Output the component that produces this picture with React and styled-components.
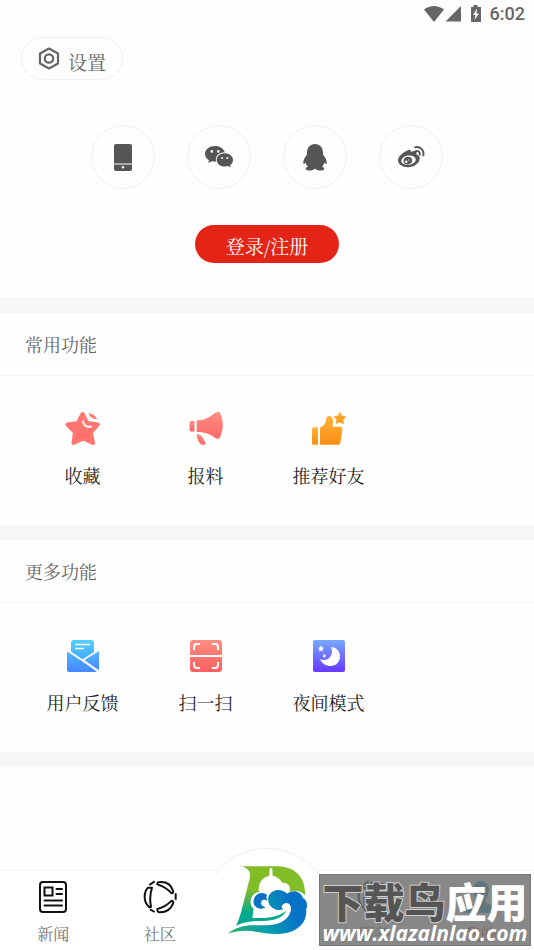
import React from 'react';
import styled, { createGlobalStyle } from 'styled-components';

const GlobalStyle = createGlobalStyle`
    * {
        box-sizing: border-box;
    }

    body {
        margin: 0;
        background: #fefefe;
        color: #333;
        font-family: "Noto Serif CJK SC", "Noto Serif SC", "Noto Sans CJK SC", serif;
    }

    button {
        font-family: inherit;
        padding: 0;
        border: 0;
        background: none;
        cursor: pointer;
    }

    svg {
        display: block;
    }
`;

const Page = styled.div`
    position: relative;
    min-height: 100vh;
    display: flex;
    flex-direction: column;
`;

const StatusBar = styled.header`
    display: flex;
    justify-content: flex-end;
    align-items: center;
    height: 27px;
    padding-right: 9px;
    color: #666;
    font: 500 18px/27px Roboto, sans-serif;

    svg {
        margin-right: 8px;
    }
`;

const Account = styled.section`
    display: flex;
    flex-direction: column;
    align-items: center;
    padding: 10px 21px 35px;
`;

const SettingsButton = styled.button`
    align-self: flex-start;
    display: flex;
    align-items: center;
    gap: 8px;
    height: 43px;
    && {
        padding: 0 16px;
        border: 1px solid #f1f1f1;
    }
    border-radius: 22px;
    color: #666;
    font-size: 19px;

    span {
        padding-top: 5px;
    }
`;

const Logins = styled.div`
    display: flex;
    gap: 32px;
    margin: 45px 0 36px;
`;

const LoginCircle = styled.button`
    && {
        border: 1px solid #f0f0f0;
    }
    width: 64px;
    height: 64px;
    border-radius: 50%;
    display: grid;
    place-items: center;
`;

const LoginButton = styled.button`
    && {
        background: #e32416;
        padding-top: 2px;
    }
    width: 144px;
    height: 38px;
    border-radius: 19px;
    color: #fff;
    font-size: 19px;
`;

const Panel = styled.section`
    border-top: 15px solid #f6f6f6;
`;

const PanelTitle = styled.h2`
    margin: 0;
    height: 63px;
    padding: 0 25px;
    border-bottom: 1px solid #f6f6f6;
    color: #666;
    font-size: 18px;
    font-weight: 400;
    line-height: 63px;
`;

const Features = styled.div`
    display: grid;
    grid-template-columns: repeat(4, 1fr);
    padding: 35px 21px;
`;

const Feature = styled.button`
    display: flex;
    flex-direction: column;
    align-items: center;
    gap: 14px;
    color: #222;
    font-size: 18px;
    line-height: 29px;
`;

const PanelEnd = styled.div`
    height: 15px;
    background: #f6f6f6;
`;

const TabBar = styled.nav`
    display: grid;
    grid-template-columns: repeat(5, 1fr);
    height: 80px;
    margin-top: auto;
    border-top: 1px solid #f3f3f3;
    background: #fff;
`;

const Tab = styled.a`
    display: flex;
    flex-direction: column;
    align-items: center;
    gap: 8px;
    padding-top: 9px;
    color: ${({ $active }) => ($active ? '#e32416' : '#777')};
    font-size: 16px;
    line-height: 24px;
    text-decoration: none;
`;

const HomeTab = styled.a`
    display: flex;
    justify-content: center;
    margin-top: -23px;

    svg {
        flex: none;
    }
`;

const Watermark = styled.aside`
    position: absolute;
    right: 3px;
    bottom: 4px;
    width: 212px;
    height: 72px;
    border: 1px solid #777;
    background: rgba(112, 112, 112, 0.83);
    color: #fff;
    text-align: center;
    white-space: nowrap;
`;

const WatermarkName = styled.div`
    font: 900 41px/50px "Noto Sans CJK SC", sans-serif;

    span {
        color: #555;
        -webkit-text-stroke: 2px #ccc;
        paint-order: stroke fill;
    }
`;

const WatermarkSite = styled.div`
    font: italic 700 21px/16px "Open Sans", sans-serif;
`;

const StatusIcons = () => (
    <svg width="58" height="18" viewBox="0 0 58 18" fill="#666" aria-hidden="true">
        <path d="M0 4.500C6-.2 14-.2 20 4.500L10 17z" />
        <path d="M37 1v15.500H21.500z" />
        <path d="M47 2h2.500V0h4v2H57v15H47z" />
        <path d="M53 3.500 49 10h2.500l-1 5L55 8.500h-2.500z" fill="#fff" />
    </svg>
);

const GearIcon = () => (
    <svg width="22" height="24" viewBox="0 0 22 24" fill="none" stroke="#666" strokeWidth="2.200" strokeLinejoin="round" aria-hidden="true">
        <path d="M11 1.500 20 6.500v10l-9 5-9-5v-10z" />
        <circle cx="11" cy="11.500" r="4.200" />
    </svg>
);

const PhoneIcon = () => (
    <svg width="18" height="27" viewBox="0 0 18 27" fill="#555" aria-hidden="true">
        <path d="M2 0h14a2 2 0 0 1 2 2v17.500H0V2a2 2 0 0 1 2-2zM0 20.500h18V25a2 2 0 0 1-2 2H2a2 2 0 0 1-2-2z" />
        <circle cx="9" cy="23.200" r="1.200" fill="#fff" />
    </svg>
);

const WechatIcon = () => (
    <svg width="28" height="22" viewBox="0 0 28 22" fill="#555" aria-hidden="true">
        <path d="M10 0C4.400 0 0 3.500 0 8c0 2.600 1.500 4.700 4 6.200L3.200 17l3.600-1.800c1.500.4 2.800.5 4.400.4-1.500-5 2.700-9.500 8.600-9.300C18.700 2.500 14.800 0 10 0z" />
        <path d="M19.700 7.300c-4.500 0-8 2.900-8 6.600s3.500 6.600 8 6.600c1.200 0 2.200-.2 3.200-.5l2.700 1.500-.6-2.300c1.800-1.300 3-3.200 3-5.300 0-3.700-3.800-6.600-8.300-6.600z" />
        <g fill="#fff">
            <circle cx="6.800" cy="5.400" r="1.300" />
            <circle cx="13.300" cy="5.400" r="1.300" />
            <circle cx="17" cy="12" r="1" />
            <circle cx="22.400" cy="12" r="1" />
        </g>
    </svg>
);

const QqIcon = () => (
    <svg width="24" height="27" viewBox="0 0 24 27" fill="#555" aria-hidden="true">
        <path d="M12 0C7 0 4 3.800 4 8.500v2C2 13 .5 15.500.3 18c-.1 2 .5 2.500 1.200 1.800l1.200-1.300c.3 1.700 1 3 2.200 4.200-1.600.5-2.300 1.300-2.100 2.300.3 1.400 2.700 1.700 4.900 1.500 1.900-.2 3.400-.8 4.300-1.700.9.900 2.400 1.500 4.300 1.700 2.200.2 4.600-.1 4.900-1.500.2-1-.5-1.800-2.100-2.300 1.200-1.200 1.900-2.500 2.200-4.200l1.200 1.300c.7.700 1.300.2 1.200-1.800-.2-2.500-1.700-5-3.700-7.500v-2C20 3.800 17 0 12 0z" />
    </svg>
);

const WeiboIcon = () => (
    <svg width="27" height="22" viewBox="0 0 27 22" aria-hidden="true">
        <path fill="#555" d="M9.800 4.200c2-1.100 3.400-.6 2.900 1.800 2.600-1.200 5.800-1.500 5.900.5 0 .7-.2 1.200-.4 1.800 2 .7 3.700 2 3.500 4.500-.3 4.300-5.300 8.400-11.800 8.400C4.600 21.200 0 18.600 0 14.300c0-3.700 4.700-8 9.800-10.100z" />
        <ellipse cx="10.500" cy="14.300" rx="7.300" ry="4.700" fill="#fff" transform="rotate(-8 10 14)" />
        <ellipse cx="9.600" cy="14.600" rx="4.400" ry="3.900" fill="#555" transform="rotate(-20 10 14)" />
        <circle cx="8.200" cy="15.700" r="1.300" fill="#fff" />
        <circle cx="11" cy="14" r=".7" fill="#fff" />
        <path d="M17 1.300c5-1.300 9.500 3 8.300 8M18 5c2.400-.6 4.300 1.300 3.700 3.700" fill="none" stroke="#555" strokeWidth="1.900" strokeLinecap="round" />
    </svg>
);

const Gradient = ({ id, from, to }) => (
    <linearGradient id={id} x1="0" y1="0" x2="0" y2="1">
        <stop offset="0" stopColor={from} />
        <stop offset="1" stopColor={to} />
    </linearGradient>
);

const StarIcon = () => (
    <svg width="36" height="36" viewBox="0 0 36 36" aria-hidden="true">
        <defs><Gradient id="star" from="#ff8478" to="#ff6766" /></defs>
        <path d="m17.500 3 4.500 9 10.800 1.500-7 7.800L28 32l-10-4.500L8.500 32l1.500-10.700-7.500-7.800L13 12z" fill="url(#star)" stroke="#ff7570" strokeWidth="4" strokeLinejoin="round" />
        <path d="M21 1.500c2 6 6 8.500 13 7.500" fill="none" stroke="#fefefe" strokeWidth="2" />
        <path d="M23.500 2.500c4 0 7 2 8.400 5.500-4 .3-7-1.800-8.400-5.500z" fill="#ff7a72" />
        <path d="M18 10.500c1 4 4 5.800 8 5" fill="none" stroke="#fff" strokeWidth="1.800" strokeLinecap="round" />
    </svg>
);

const HornIcon = () => (
    <svg width="36" height="36" viewBox="0 0 36 36" aria-hidden="true">
        <defs><Gradient id="horn" from="#ff8e82" to="#ff6868" /></defs>
        <g fill="url(#horn)">
            <path d="M8.700 9.500c7-.2 12-2.500 17.500-7C29 .5 31.500 0 32.500 3c3 7 3 14.500 0 22-1 3.500-3.500 3.500-6 1.500-5-4-11-5.500-17.800-5.500z" />
            <path d="M3 10h3.500v10.500H3Q1.500 20.500 1.500 18.500v-6Q1.500 10 3 10z" />
            <path d="M8.700 23c4 0 7 4 9 10-2 1.500-4.500 1-6-1-2-2.500-3-5.500-3-9z" />
        </g>
    </svg>
);

const ThumbIcon = () => (
    <svg width="36" height="36" viewBox="0 0 36 36" aria-hidden="true">
        <defs><Gradient id="thumb" from="#ffb43b" to="#fb8b12" /></defs>
        <g fill="url(#thumb)">
            <path d="M2.500 16.300H7v17.500H2.500q-1.500 0-1.500-1.500v-14.500q0-1.500 1.500-1.500z" />
            <path d="M9 16.300q5.500-1.300 6-7.800c.3-2.800 2.200-4 4.300-3.300q3.400 1.300 2.700 6.300l-.5 4.200H29c2 0 2.800 1 2.400 3l-2 12.300c-.3 2-1.200 2.800-3 2.800H9z" />
            <path d="m28.800 1.400 2 3.600 4 .8-2.900 2.900.5 4-3.600-1.800-3.600 1.700.7-4L23 5.700l4-.7z" stroke="#ffb43b" strokeLinejoin="round" />
        </g>
    </svg>
);

const MailIcon = () => (
    <svg width="36" height="36" viewBox="0 0 36 36" aria-hidden="true">
        <defs>
            <Gradient id="letter" from="#55cfff" to="#42a8ff" />
            <Gradient id="envelope" from="#50b8ff" to="#4687ff" />
        </defs>
        <path d="M9 2h17q3 0 3 3v10.500L18.500 22 6 14V5q0-3 3-3z" fill="url(#letter)" />
        <path d="M2 12.500 16 21.500 32 34H4q-2 0-2-2V12.500zM34 12.500V33L19 21.800z" fill="url(#envelope)" />
        <path d="m1.500 12 32 21M18 22l16-10M10 6.500h15M10 10.500h9" fill="none" stroke="#fff" strokeWidth="1.700" />
    </svg>
);

const ScanIcon = () => (
    <svg width="36" height="36" viewBox="0 0 36 36" aria-hidden="true">
        <defs><Gradient id="scan" from="#ff8e80" to="#ff6060" /></defs>
        <path d="M5 2h26q3 0 3 3v12H2V5q0-3 3-3zM2 19h32v12q0 3-3 3H5q-3 0-3-3z" fill="url(#scan)" />
        <path d="M6 12V9q0-3 3-3h3M24 6h3q3 0 3 3v3M6 24v3q0 3 3 3h3M24 30h3q3 0 3-3v-3" fill="none" stroke="#fff" strokeWidth="2" />
    </svg>
);

const MoonIcon = () => (
    <svg width="36" height="36" viewBox="0 0 36 36" aria-hidden="true">
        <defs><Gradient id="night" from="#78a8ff" to="#6638ff" /></defs>
        <rect x="2" y="2" width="32" height="32" rx="2" fill="url(#night)" />
        <g fill="#fff">
            <path d="M20 9c5 0 9 4 9 9.500C29 24 25 28 19.500 28c-4.700 0-8.500-2.500-10.500-7 7 3.500 15-3.500 11-12z" />
            <path d="m10 7 1 2.200 2 .5-1.500 1.500.3 2.300-1.800-1-2 1 .4-2.300L7 9.700l2.200-.5z" />
            <circle cx="13.300" cy="18" r="1.400" />
        </g>
    </svg>
);

const NewsIcon = () => (
    <svg width="34" height="34" viewBox="0 0 34 34" fill="none" stroke="#111" strokeWidth="2" strokeLinecap="round" aria-hidden="true">
        <rect x="4" y="2" width="26" height="30" rx="3" />
        <path d="M8.500 7.500h8v8h-8zM20.500 9H26M20.500 14H26M8.500 20.500H26M8.500 25.500H26" />
    </svg>
);

const CommunityIcon = () => (
    <svg width="34" height="34" viewBox="430 121 102 102" fill="none" stroke="#111" strokeWidth="6" strokeLinejoin="round" aria-hidden="true">
        <path d="M445 144Q435 154 435 171q0 21 15 32l4-1q-6-28 3-58z" />
        <path d="M473 134q-1-7 8-7 31-1 39 26 2 8-4 8-17-19-43-27z" />
        <path d="M473 208q26-7 43-25 7 1 4 9-10 26-39 26-9 0-8-10z" />
        <path d="m449 136 16-11M451 209l14 8M528 161v19" />
    </svg>
);

const HomeLogo = () => (
    <svg width="108" height="90" viewBox="0 0 108 90" aria-label="首页" role="img">
        <defs>
            <linearGradient id="letterD" x1="0" y1="0" x2="0" y2="1">
                <stop offset=".4" stopColor="#80bd27" />
                <stop offset=".8" stopColor="#00a98e" />
            </linearGradient>
            <linearGradient id="wave" gradientUnits="userSpaceOnUse" x1="690" y1="285" x2="880" y2="215">
                <stop offset="0" stopColor="#2fb26c" />
                <stop offset=".55" stopColor="#069fae" />
                <stop offset="1" stopColor="#0872c7" />
            </linearGradient>
        </defs>
        <path d="M3 26C27-8 81-8 105 26V90H3z" fill="#fff" />
        <path d="M3 26C27-8 81-8 105 26" fill="none" stroke="#eee" />
        {/* drawn on a larger grid, y grows down from the top of the letter */}
        <g transform="translate(-213 -9) scale(.3333)">
            <path d="M723 82h112c54 2 83 37 80 87-10-14-30-17-45-11 2-18-6-27-23-27-7-13-17-19-29-21l-1-21-4-3-4 3-1 21c-22 5-35 24-31 49-26 2-33 39-16 50l-4 27c38 3 76-1 103-21-10 18-30 28-58 30-32 1-62-1-94 15 8-14 12-30 16-43l25-98c6-23-8-31-27-40z" fill="url(#letterD)" />
            <path d="M684 284c22-18 46-25 76-25 46 0 86 2 106-29 8-12 9-24 4-32-5-9-18-8-24 2-2 5 0 8 4 11-16 6-36-2-43-17-8-20 4-38 24-41 13-1 23 4 31 11 18-13 40-8 47 13 12 5 15 22 10 34 3 48-37 74-89 74-52 0-84-21-146-1z" fill="url(#wave)" />
            <path d="M800 168c-20-12-38 1-38 21 0 16 18 23 32 16-10-3-14-11-11-17 3-8 11-9 18-5-4-6-4-11-1-15z" fill="#0872c7" stroke="#0872c7" strokeWidth="3" strokeLinejoin="round" />
        </g>
    </svg>
);

const ProfileIcon = () => (
    <svg width="34" height="34" viewBox="0 0 34 34" fill="#159bc8" aria-hidden="true">
        <path d="M17 1c5 0 8 4 8 9 0 4-2 7-4 9v3l10 5 3 6H0l3-6 10-5v-3c-2-2-4-5-4-9 0-5 3-9 8-9z" />
    </svg>
);

const logins = [
    { name: '手机登录', Icon: PhoneIcon },
    { name: '微信登录', Icon: WechatIcon },
    { name: 'QQ登录', Icon: QqIcon },
    { name: '微博登录', Icon: WeiboIcon },
];

const panels = [
    {
        title: '常用功能',
        items: [
            { name: '收藏', Icon: StarIcon },
            { name: '报料', Icon: HornIcon },
            { name: '推荐好友', Icon: ThumbIcon },
        ],
    },
    {
        title: '更多功能',
        items: [
            { name: '用户反馈', Icon: MailIcon },
            { name: '扫一扫', Icon: ScanIcon },
            { name: '夜间模式', Icon: MoonIcon },
        ],
    },
];

const App = () => {
    return (
        <>
        <GlobalStyle />
        <Page>
            <StatusBar>
                <StatusIcons />
                <time>6:02</time>
            </StatusBar>
            <Account>
                <SettingsButton type="button"><GearIcon /><span>设置</span></SettingsButton>
                <Logins>
                    {logins.map(({ name, Icon }) => (
                        <LoginCircle key={name} type="button" aria-label={name}><Icon /></LoginCircle>
                    ))}
                </Logins>
                <LoginButton type="button">登录/注册</LoginButton>
            </Account>
            {panels.map(({ title, items }) => (
                <Panel key={title}>
                    <PanelTitle>{title}</PanelTitle>
                    <Features>
                        {items.map(({ name, Icon }) => (
                            <Feature key={name} type="button"><Icon />{name}</Feature>
                        ))}
                    </Features>
                </Panel>
            ))}
            <PanelEnd />
            <TabBar>
                <Tab href="#news"><NewsIcon />新闻</Tab>
                <Tab href="#community"><CommunityIcon />社区</Tab>
                <HomeTab href="#home"><HomeLogo /></HomeTab>
                <Tab href="#service"><CommunityIcon />服务</Tab>
                <Tab href="#mine" $active><ProfileIcon />我的</Tab>
            </TabBar>
            <Watermark>
                <WatermarkName><span>下载鸟</span>应用</WatermarkName>
                <WatermarkSite>www.xlazalnlao.com</WatermarkSite>
            </Watermark>
        </Page>
        </>
    );
};

export default App;
